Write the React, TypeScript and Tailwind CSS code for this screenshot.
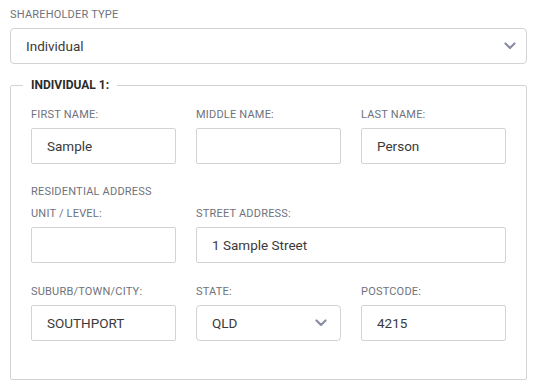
import React from 'react';

const Chevron: React.FC<{ className?: string }> = ({ className }) => (
  <svg width="12" height="8" viewBox="0 0 12 8" className={className} fill="none">
    <path d="M1.5 1.5 L6 6 L10.5 1.5" stroke="currentColor" strokeWidth="2.2" strokeLinecap="round" strokeLinejoin="round" />
  </svg>
);

const Label: React.FC<{ children: React.ReactNode; className?: string }> = ({ children, className = '' }) => (
  <div className={`text-[11px] leading-[13px] text-[#6f727c] tracking-[0.2px] ${className}`}>{children}</div>
);

const Field: React.FC<{ label: string; value?: string; className?: string }> = ({ label, value = '', className = '' }) => (
  <div className={className}>
    <Label className="mb-[7px]">{label}</Label>
    <div className="h-9 border border-[#d3d3d6] rounded-[2px] pl-[15px] flex items-center text-[13.5px] text-[#3a3a3a]">
      {value}
    </div>
  </div>
);

export default function App() {
  return (
    <div className="w-[537px] h-[389px] bg-white pl-[10px] pt-[8px]" style={{ fontFamily: 'Roboto, "Liberation Sans", sans-serif' }}>
      <div className="w-[517px]">
        <Label className="mb-[7px]">SHAREHOLDER TYPE</Label>
        <div className="h-9 border border-[#d3d3d6] rounded-[4px] pl-[15px] pr-[10px] flex items-center justify-between text-[13.5px] text-[#3a3a3a]">
          <span>Individual</span>
          <Chevron className="text-[#8b8ea3]" />
        </div>

        <fieldset className="mt-[13px] border border-[#d3d3d6] rounded-[2px] px-5 pt-[15px] pb-[38px]">
          <legend className="ml-[-8px] px-2 text-[12px] leading-4 font-bold text-[#2b2b2b]">INDIVIDUAL 1:</legend>

          <div className="grid grid-cols-3 gap-x-5">
            <Field label="FIRST NAME:" value="Sample" />
            <Field label="MIDDLE NAME:" />
            <Field label="LAST NAME:" value="Person" />
          </div>

          <Label className="mt-[21px] mb-[9px]">RESIDENTIAL ADDRESS</Label>

          <div className="grid grid-cols-3 gap-x-5">
            <Field label="UNIT / LEVEL:" />
            <Field label="STREET ADDRESS:" value="1 Sample Street" className="col-span-2" />
          </div>

          <div className="grid grid-cols-3 gap-x-5 mt-[22px]">
            <Field label="SUBURB/TOWN/CITY:" value="SOUTHPORT" />
            <div>
              <Label className="mb-[7px]">STATE:</Label>
              <div className="h-9 border border-[#d3d3d6] rounded-[4px] pl-[15px] pr-[13px] flex items-center justify-between text-[13.5px] text-[#3a3a3a]">
                <span>QLD</span>
                <Chevron className="text-[#8b8ea3]" />
              </div>
            </div>
            <Field label="POSTCODE:" value="4215" />
          </div>
        </fieldset>
      </div>
    </div>
  );
}
